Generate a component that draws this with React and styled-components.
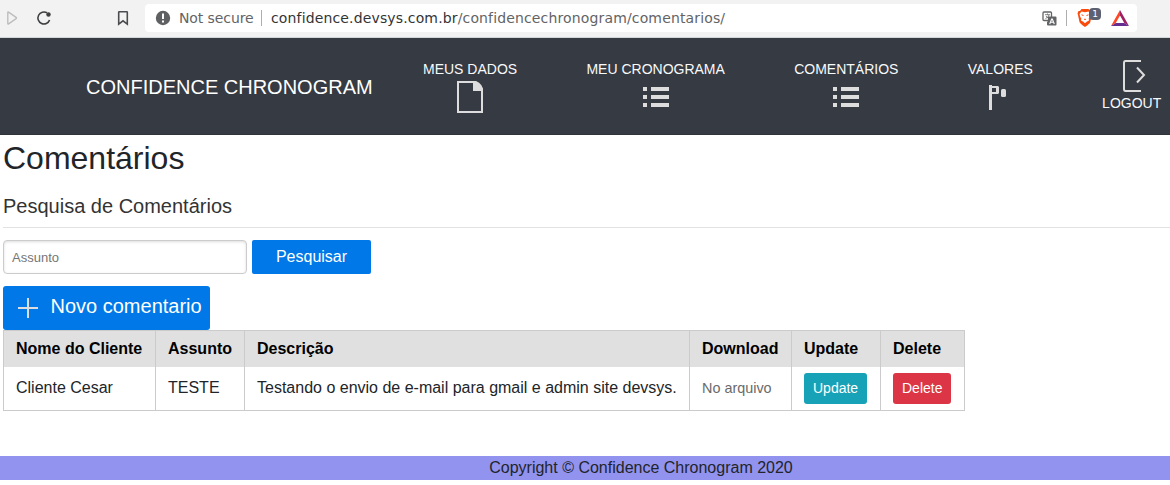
import React from "react";
import styled, { createGlobalStyle } from "styled-components";

const GlobalStyle = createGlobalStyle`
  *, *::before, *::after { box-sizing: border-box; }
  body {
    margin: 0;
    background: #fff;
    color: #212529;
    font: 400 16px/24px "Liberation Sans", Arial, sans-serif;
    overflow: hidden;
  }
`;

const BrowserBar = styled.div`
  display: flex;
  align-items: flex-start;
  height: 38px;
  padding: 4px 33px 0 4px;
  background: #f2f2f2;
  border-bottom: 1px solid #d3d7da;
`;

const BrowserButton = styled.span`
  display: flex;
  width: 16px;
  height: 28px;
  align-items: center;
  justify-content: center;
  margin-right: ${(p) => p.$after}px;
`;

const AddressBar = styled.div`
  display: flex;
  flex: 1;
  align-items: center;
  height: 28px;
  padding: 0 8px 0 10px;
  background: #fff;
  border-radius: 4px;
  color: #636466;
  font: 14px/28px "DejaVu Sans", sans-serif;
  white-space: nowrap;
`;

const Security = styled.span`
  width: 75px;
  margin-left: 8px;
  letter-spacing: -0.1px;
`;

const Separator = styled.span`
  width: 1px;
  height: 16px;
  margin: 0 ${(p) => p.$right}px 0 ${(p) => p.$left}px;
  background: #aeafb0;
`;

const Url = styled.span`
  flex: 1;
  letter-spacing: 0.145px;
  b { font-weight: 400; color: #333436; }
`;

const Shield = styled.span`
  position: relative;
  display: flex;
  width: 34px;
`;

const ShieldCount = styled.span`
  position: absolute;
  left: 12px;
  top: -1px;
  width: 12px;
  height: 12px;
  border-radius: 4px;
  background: #5c6070;
  color: #fff;
  font-size: 9px;
  line-height: 12px;
  text-align: center;
`;

const Navbar = styled.nav`
  display: flex;
  align-items: flex-start;
  height: 97px;
  padding: 20px 0 0 86px;
  background: #363a42;
  border-bottom: 1px solid #30343a;
  white-space: nowrap;
`;

const Brand = styled.a`
  width: 286px;
  margin: 14px 51px 0 0;
  color: #fff;
  font-size: 20px;
  line-height: 30px;
`;

const NavLinks = styled.div`
  display: flex;
  align-items: flex-start;
  gap: 69.3px;
`;

const NavLink = styled.a`
  display: flex;
  flex-direction: column;
  align-items: center;
  padding-top: ${(p) => p.$top || 0}px;
  color: #f8f9fa;
  font-size: 14px;
  line-height: 22px;
  svg { display: block; margin-top: 1px; }
`;

const Main = styled.main`
  display: flex;
  flex-direction: column;
  align-items: flex-start;
  height: 321px;
  padding: 4px 0 0 3px;
`;

const Title = styled.h1`
  margin: 0;
  font-size: 32px;
  font-weight: 400;
  line-height: 38px;
`;

const Legend = styled.h2`
  align-self: stretch;
  height: 36px;
  margin: 15px 0 12px;
  border-bottom: 1px solid #e2e2e2;
  color: #333;
  font-size: 20px;
  font-weight: 400;
  line-height: 28px;
`;

const SearchForm = styled.form`
  display: flex;
  gap: 5px;
  margin-bottom: 12px;
`;

const SearchInput = styled.input`
  width: 244px;
  height: 34px;
  padding: 0 8px;
  border: 1px solid #ccc;
  border-radius: 4px;
  box-shadow: inset 0 1px 3px #ddd;
  font: 13px "Liberation Sans", Arial, sans-serif;
  &::placeholder { color: #757575; }
`;

const SearchButton = styled.button`
  width: 119px;
  height: 34px;
  padding: 0;
  border: 0;
  border-radius: 2px;
  background: #0078e7;
  color: #fff;
  font: 16px/34px "Liberation Sans", Arial, sans-serif;
`;

const NewButton = styled.a`
  display: flex;
  width: 207px;
  height: 44px;
  padding-left: 15px;
  border-radius: 3px;
  background: #0078e7;
  color: #fff;
  font-size: 20px;
  line-height: 41px;
  white-space: nowrap;
  svg { margin: 12px 12.5px 0 0; }
`;

const Table = styled.table`
  width: 962px;
  table-layout: fixed;
  border-collapse: separate;
  border-spacing: 0;
  border: 1px solid #cbcbcb;
  white-space: nowrap;
`;

const Col = styled.col`
  width: ${(p) => p.$width}px;
`;

const HeadCell = styled.th`
  height: 36px;
  padding: 0 0 0 12px;
  border-left: 1px solid #cbcbcb;
  background: #e0e0e0;
  color: #000;
  text-align: left;
  &:first-child { border-left: 0; }
`;

const Cell = styled.td`
  height: 43px;
  padding: 0 0 ${(p) => (p.$action ? 0 : 2)}px 12px;
  border-left: 1px solid #cbcbcb;
  &:first-child { border-left: 0; }
`;

const Muted = styled.span`
  color: #6a6a6a;
  font-size: 14.4px;
`;

const ActionButton = styled.a`
  display: block;
  width: ${(p) => p.$width}px;
  height: 31px;
  padding-left: 9px;
  border-radius: 3px;
  background: ${(p) => p.$color};
  color: #fff;
  font-size: 14px;
  line-height: 31px;
`;

const Footer = styled.footer`
  height: 24px;
  padding-left: 112px;
  background: #9292ef;
  text-align: center;
`;

const DocumentIcon = () => (
  <svg width="32" height="32" viewBox="0 0 32 32">
    <path d="M4 1h17l7 7v23H4z" fill="none" stroke="#ddd" strokeWidth="2" />
    <path d="M19 0h3q7 3 7 10H19z" fill="#ddd" />
  </svg>
);

const ListIcon = () => (
  <svg width="32" height="32" viewBox="0 0 32 32" fill="#ddd" shapeRendering="crispEdges">
    <path d="M3 6h4v4H3zM3 14h4v4H3zM3 22h4v4H3zM11 6h18v4H11zM11 14h18v4H11zM11 22h18v4H11z" />
  </svg>
);

const FlagIcon = () => (
  <svg width="32" height="32" viewBox="0 0 32 32" fill="#ddd">
    <path d="M5 4h3v1h6l1 1v6l-1 1H8v16H5zM8 7v4h4V7z" fillRule="evenodd" />
    <rect x="17" y="8" width="5" height="8" rx="1.5" />
  </svg>
);

const LogoutIcon = () => (
  <svg width="32" height="32" viewBox="0 0 32 32" fill="none" stroke="#ddd" strokeWidth="2">
    <path d="M25 1H9.5Q8 1 8 3v26q0 2 1.500 2H25M21 7.500l7 7.500-7 7.500" />
  </svg>
);

const TranslateIcon = () => (
  <svg width="15" height="15" viewBox="0 0 15 15">
    <rect x="1" y="1" width="8.500" height="8.500" rx="1" fill="#fff" stroke="#636466" strokeWidth="1.300" />
    <path d="M3 3.700h5M5.500 2.500v1.200M3.500 7.500Q6.500 6.500 7 4M4 5q1 2 3.500 2.500" fill="none" stroke="#636466" strokeWidth=".8" />
    <path d="M6 5.500h7.500a1 1 0 0 1 1 1v7a1 1 0 0 1-1 1H6a1 1 0 0 1-1-1v-3h1z" fill="#636466" />
    <path d="M7.700 13l2-5h.6l2 5M8.500 11.300h3" fill="none" stroke="#fff" strokeWidth="1.100" />
  </svg>
);

const LionIcon = () => (
  <svg width="16" height="18" viewBox="0 0 16 18">
    <path d="M4.500 0h7l1.500 2h1.500l1 2.500-.6 1.500-1.600 7Q13 14.500 8 18 3 14.500 2.500 13L1 6 .5 4.500l1-2.500H3z" fill="#fb4b0b" />
    <path d="M4.500 2.500l3.500.7 3.500-.7 2 2.500-.8 3-1 1.500.3 2-2.300 1.300L8 14.200l-1.700-1.400L4 11.500l.3-2-1-1.500L2.500 5z" fill="#fff" />
    <path d="M4.500 5.800l2 .7M11.500 5.800l-2 .7M7 10.300h2" stroke="#fb4b0b" strokeWidth="1" />
  </svg>
);

const TriangleIcon = () => (
  <svg width="18" height="16" viewBox="0 0 19 16" preserveAspectRatio="none">
    <path d="M9.500 0L0 16l5-3 4.500-7.500z" fill="#ff4724" />
    <path d="M9.500 0L19 16l-5-3-4.500-7.500z" fill="#9e1f63" />
    <path d="M0 16h19l-5-3H5z" fill="#662d91" />
  </svg>
);

const navItems = [
  { label: "MEUS DADOS", Icon: DocumentIcon },
  { label: "MEU CRONOGRAMA", Icon: ListIcon },
  { label: "COMENTÁRIOS", Icon: ListIcon },
  { label: "VALORES", Icon: FlagIcon },
];

const columns = [
  ["Nome do Cliente", 151],
  ["Assunto", 89],
  ["Descrição", 445],
  ["Download", 102],
  ["Update", 89],
  ["Delete", 84],
];

export default function App() {
  return (
    <>
      <GlobalStyle />
      <BrowserBar>
        <BrowserButton $after={16}>
          <svg width="16" height="16" viewBox="0 0 16 16">
            <path d="M3.800 2.500v11q0 .8.8.3l7.500-5.200q.8-.6 0-1.200L4.600 2.200q-.8-.5-.8.3z" fill="none" stroke="#bdbdbd" strokeWidth="1.400" />
          </svg>
        </BrowserButton>
        <BrowserButton $after={63}>
          <svg width="16" height="16" viewBox="0 0 16 16">
            <path d="M11 2.800A6 6 0 1 0 13.600 10" fill="none" stroke="#3e3f41" strokeWidth="1.600" />
            <circle cx="12.500" cy="4.500" r="2.200" fill="#3e3f41" />
          </svg>
        </BrowserButton>
        <BrowserButton $after={14}>
          <svg width="16" height="16" viewBox="0 0 16 16">
            <path d="M4.200 1.700h7.600q.5 0 .5.500v12L8 10.800l-4.300 3.400v-12q0-.5.500-.5z" fill="none" stroke="#4b4c4f" strokeWidth="1.600" />
          </svg>
        </BrowserButton>
        <AddressBar>
          <svg width="16" height="16" viewBox="0 0 16 16">
            <circle cx="8" cy="8" r="7.200" fill="#5f6062" />
            <path d="M7 3.500h2v5.500H7zM7 10.500h2v2H7z" fill="#fff" />
          </svg>
          <Security>Not secure</Security>
          <Separator $left={7} $right={9} />
          <Url><b>confidence.devsys.com.br</b>/confidencechronogram/comentarios/</Url>
          <TranslateIcon />
          <Separator $left={9} $right={10} />
          <Shield>
            <LionIcon />
            <ShieldCount>1</ShieldCount>
          </Shield>
          <TriangleIcon />
        </AddressBar>
      </BrowserBar>
      <Navbar>
        <Brand>CONFIDENCE CHRONOGRAM</Brand>
        <NavLinks>
          {navItems.map(({ label, Icon }) => (
            <NavLink key={label}>
              {label}
              <Icon />
            </NavLink>
          ))}
          <NavLink $top={1}>
            <LogoutIcon />
            LOGOUT
          </NavLink>
        </NavLinks>
      </Navbar>
      <Main>
        <Title>Comentários</Title>
        <Legend>Pesquisa de Comentários</Legend>
        <SearchForm>
          <SearchInput placeholder="Assunto" />
          <SearchButton type="button">Pesquisar</SearchButton>
        </SearchForm>
        <NewButton>
          <svg width="20" height="20" viewBox="0 0 20 20">
            <path d="M9 0h2v9h9v2h-9v9H9v-9H0V9h9z" fill="#ddd" />
          </svg>
          Novo comentario
        </NewButton>
        <Table>
          <colgroup>
            {columns.map(([name, width]) => <Col key={name} $width={width} />)}
          </colgroup>
          <thead>
            <tr>{columns.map(([name]) => <HeadCell key={name}>{name}</HeadCell>)}</tr>
          </thead>
          <tbody>
            <tr>
              <Cell>Cliente Cesar</Cell>
              <Cell>TESTE</Cell>
              <Cell>Testando o envio de e-mail para gmail e admin site devsys.</Cell>
              <Cell><Muted>No arquivo</Muted></Cell>
              <Cell $action><ActionButton $width={63} $color="#17a2b8">Update</ActionButton></Cell>
              <Cell $action><ActionButton $width={58} $color="#dc3545">Delete</ActionButton></Cell>
            </tr>
          </tbody>
        </Table>
      </Main>
      <Footer>Copyright © Confidence Chronogram 2020</Footer>
    </>
  );
}
